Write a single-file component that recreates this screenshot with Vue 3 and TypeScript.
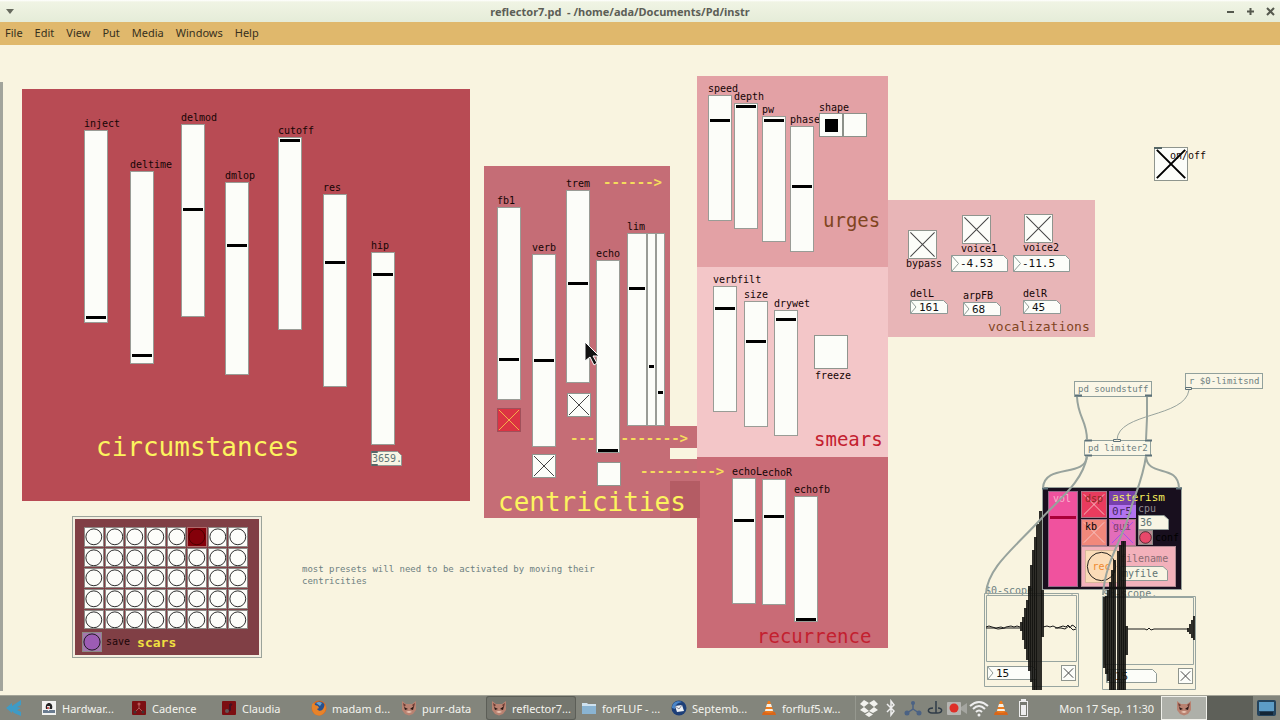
<script setup lang="ts">
import { ref } from 'vue'

interface Box { x: number; y: number; w: number; h: number }
interface Slider extends Box { id: string; label?: string; knob: number }
interface Toggle extends Box { id: string; on: boolean; tone?: string }
interface Num extends Box { id: string; value: string; arrow: boolean; tone?: string }
interface Caption { x: number; y: number; text: string; kind: string; for?: string }

const title = 'reflector7.pd  - /home/ada/Documents/Pd/instr'

// Patch coordinates start above the visible part of the canvas.
const scrollTop = 45

const at = (x: number, y: number) => ({ left: `${x}px`, top: `${y - scrollTop}px` })
const box = (b: Box) => ({ ...at(b.x, b.y), width: `${b.w}px`, height: `${b.h}px` })

const panels: (Box & { tone: string })[] = [
  { x: 22, y: 89, w: 448, h: 412, tone: 'circumstances' },
  { x: 484, y: 166, w: 186, h: 352, tone: 'centricities' },
  { x: 670, y: 426, w: 27, h: 22, tone: 'centricities' },
  { x: 670, y: 459, w: 27, h: 24, tone: 'centricities' },
  { x: 697, y: 76, w: 191, h: 191, tone: 'urges' },
  { x: 697, y: 267, w: 191, h: 190, tone: 'smears' },
  { x: 697, y: 457, w: 191, h: 191, tone: 'recurrence' },
  { x: 670, y: 481, w: 30, h: 37, tone: 'overlap' },
  { x: 888, y: 200, w: 207, h: 137, tone: 'vocalizations' },
]

const sliders: Slider[] = [
  { id: 'inject', label: 'inject', x: 84, y: 130, w: 24, h: 193, knob: 317 },
  { id: 'deltime', label: 'deltime', x: 130, y: 171, w: 24, h: 193, knob: 355 },
  { id: 'delmod', label: 'delmod', x: 181, y: 124, w: 24, h: 193, knob: 209 },
  { id: 'dmlop', label: 'dmlop', x: 225, y: 182, w: 24, h: 193, knob: 245 },
  { id: 'cutoff', label: 'cutoff', x: 278, y: 137, w: 24, h: 193, knob: 140 },
  { id: 'res', label: 'res', x: 323, y: 194, w: 24, h: 193, knob: 262 },
  { id: 'hip', label: 'hip', x: 371, y: 252, w: 24, h: 193, knob: 274 },
  { id: 'fb1', label: 'fb1', x: 497, y: 207, w: 24, h: 193, knob: 359 },
  { id: 'verb', label: 'verb', x: 532, y: 254, w: 24, h: 193, knob: 360 },
  { id: 'trem', label: 'trem', x: 566, y: 190, w: 24, h: 193, knob: 283 },
  { id: 'echo', label: 'echo', x: 596, y: 260, w: 24, h: 193, knob: 450 },
  { id: 'lim', label: 'lim', x: 627, y: 233, w: 20, h: 193, knob: 288 },
  { id: 'lim-left', x: 647, y: 233, w: 9, h: 193, knob: 366 },
  { id: 'lim-right', x: 656, y: 233, w: 9, h: 193, knob: 392 },
  { id: 'speed', label: 'speed', x: 708, y: 95, w: 24, h: 126, knob: 120 },
  { id: 'depth', label: 'depth', x: 734, y: 103, w: 24, h: 126, knob: 106 },
  { id: 'pw', label: 'pw', x: 762, y: 116, w: 24, h: 126, knob: 120 },
  { id: 'phase', label: 'phase', x: 790, y: 126, w: 24, h: 126, knob: 186 },
  { id: 'verbfilt', label: 'verbfilt', x: 713, y: 286, w: 24, h: 126, knob: 308 },
  { id: 'size', label: 'size', x: 744, y: 301, w: 24, h: 126, knob: 341 },
  { id: 'drywet', label: 'drywet', x: 774, y: 310, w: 24, h: 126, knob: 319 },
  { id: 'echoL', label: 'echoL', x: 732, y: 478, w: 24, h: 126, knob: 520 },
  { id: 'echoR', label: 'echoR', x: 762, y: 479, w: 24, h: 126, knob: 516 },
  { id: 'echofb', label: 'echofb', x: 794, y: 496, w: 24, h: 126, knob: 619 },
]
const labelHeight = 12
const travel = (s: Slider) => s.h - 5
const level = (s: Slider) => s.y + s.h - 3 - s.knob

const toggles = ref<Toggle[]>([
  { id: 'fb1-on', x: 497, y: 408, w: 24, h: 24, on: true, tone: 'hot' },
  { id: 'trem-on', x: 567, y: 393, w: 24, h: 24, on: true },
  { id: 'verb-on', x: 532, y: 454, w: 24, h: 24, on: true },
  { id: 'echo-on', x: 597, y: 462, w: 24, h: 24, on: false },
  { id: 'freeze', x: 814, y: 335, w: 34, h: 34, on: false },
  { id: 'bypass', x: 908, y: 230, w: 29, h: 29, on: true },
  { id: 'voice1', x: 962, y: 215, w: 29, h: 29, on: true },
  { id: 'voice2', x: 1024, y: 214, w: 29, h: 29, on: true },
  { id: 'onoff', x: 1154, y: 147, w: 34, h: 34, on: true, tone: 'heavy' },
])
const scopeToggles = ref<Toggle[]>([
  { id: 'scope1-on', x: 1061, y: 665, w: 15, h: 16, on: true },
  { id: 'scope2-on', x: 1178, y: 668, w: 15, h: 16, on: true },
])

const numbers: Num[] = [
  { id: 'hip-hz', x: 371, y: 451, w: 31, h: 15, value: '3659.', arrow: false, tone: 'faded' },
  { id: 'voice1-db', x: 951, y: 255, w: 57, h: 17, value: '-4.53', arrow: true },
  { id: 'voice2-db', x: 1013, y: 255, w: 57, h: 17, value: '-11.5', arrow: true },
  { id: 'delL', x: 910, y: 300, w: 38, h: 14, value: '161', arrow: true },
  { id: 'arpFB', x: 963, y: 302, w: 38, h: 14, value: '68', arrow: true },
  { id: 'delR', x: 1023, y: 300, w: 38, h: 14, value: '45', arrow: true },
  { id: 'scope1-n', x: 987, y: 666, w: 50, h: 14, value: '15', arrow: true },
  { id: 'scope2-n', x: 1106, y: 669, w: 51, h: 14, value: '15', arrow: true },
]
const frame = (n: Box) => {
  const r = n.w - 0.5
  const b = n.h - 0.5
  return `M.5 .5H${r - 4}L${r} 4.5V${b}H.5Z`
}
const pointer = (n: Box) => `M.5 .5L${n.h / 2 - 1} ${n.h / 2}L.5 ${n.h - 0.5}`

const captions: Caption[] = [
  { x: 96, y: 432, text: 'circumstances', kind: 'huge' },
  { x: 498, y: 487, text: 'centricities', kind: 'huge' },
  { x: 823, y: 208, text: 'urges', kind: 'big brown' },
  { x: 814, y: 427, text: 'smears', kind: 'big red' },
  { x: 757, y: 624, text: 'recurrence', kind: 'big red' },
  { x: 988, y: 319, text: 'vocalizations', kind: 'mid brown' },
  { x: 819, y: 102, text: 'shape', kind: 'small' },
  { x: 815, y: 370, text: 'freeze', kind: 'small', for: 'freeze' },
  { x: 906, y: 258, text: 'bypass', kind: 'small', for: 'bypass' },
  { x: 961, y: 243, text: 'voice1', kind: 'small', for: 'voice1' },
  { x: 1023, y: 242, text: 'voice2', kind: 'small', for: 'voice2' },
  { x: 1170, y: 150, text: 'on/off', kind: 'small', for: 'onoff' },
  { x: 910, y: 288, text: 'delL', kind: 'small', for: 'delL' },
  { x: 963, y: 290, text: 'arpFB', kind: 'small', for: 'arpFB' },
  { x: 1023, y: 288, text: 'delR', kind: 'small', for: 'delR' },
  { x: 985, y: 585, text: '$0-scope', kind: 'small faded' },
  { x: 1103, y: 588, text: '$0-scope.', kind: 'small faded' },
]
const arrows: Caption[] = [
  { x: 603, y: 174, text: '------>', kind: 'arrow' },
  { x: 570, y: 430, text: '------------->', kind: 'arrow' },
  { x: 640, y: 463, text: '--------->', kind: 'arrow' },
]

const objects: (Box & { text: string })[] = [
  { x: 1074, y: 381, w: 78, h: 16, text: 'pd soundstuff' },
  { x: 1185, y: 373, w: 78, h: 16, text: 'r $0-limitsnd' },
  { x: 1084, y: 440, w: 67, h: 16, text: 'pd limiter2' },
]

const activePreset = 5
const menus = ['File', 'Edit', 'View', 'Put', 'Media', 'Windows', 'Help']

const tasks = [
  { icon: 'java', text: 'Hardwar...' },
  { icon: 'cadence', text: 'Cadence' },
  { icon: 'claudia', text: 'Claudia' },
  { icon: 'firefox', text: 'madam d...' },
  { icon: 'cat', text: 'purr-data' },
  { icon: 'cat', text: 'reflector7...', active: true },
  { icon: 'folder', text: 'forFLUF - ...' },
  { icon: 'mail', text: 'Septemb...' },
  { icon: 'cone', text: 'forfluf5.w...' },
]
const tray = ['dropbox', 'bluetooth', 'network', 'jack', 'record', 'wifi', 'cone', 'battery']

// Waveform columns: x, top, bottom
const burst1 = [
  [1020, 622, 631], [1022, 617, 640], [1024, 608, 649], [1026, 600, 660], [1028, 586, 671],
  [1030, 565, 682], [1032, 550, 690], [1034, 537, 690], [1036, 524, 690], [1039, 511, 690], [1041, 590, 637],
]
const burst2 = [
  [1103, 597, 668], [1105, 596, 674], [1107, 590, 681], [1109, 582, 690], [1111, 570, 690],
  [1113, 560, 690], [1117, 551, 690], [1119, 545, 690], [1121, 541, 690], [1123, 541, 690], [1125, 626, 655],
]
const tail2 = [[1187, 628, 632], [1189, 624, 634], [1191, 620, 638], [1193, 616, 640]]
</script>

<template>
  <div class="window">
    <header class="titlebar">
      <button class="tb" aria-label="Window menu"><svg width="8" height="5"><path d="M0 0H8L4 5Z" fill="#666a5e" /></svg></button>
      <h1>{{ title }}</h1>
      <div class="controls">
        <button class="tb" aria-label="Minimize"><svg width="9" height="9"><path d="M1 5H8" /></svg></button>
        <button class="tb" aria-label="Maximize"><svg width="9" height="9"><path d="M1 4.500H8M4.500 1V8" /></svg></button>
        <button class="tb" aria-label="Close"><svg width="9" height="9"><path d="M1 1L8 8M8 1L1 8" /></svg></button>
      </div>
    </header>

    <nav class="menubar"><button v-for="m in menus" :key="m">{{ m }}</button></nav>

    <main class="canvas">
      <div class="edge"></div>
      <div v-for="(p, i) in panels" :key="i" class="item" :class="['p-' + p.tone]" :style="box(p)"></div>
      <span v-for="a in arrows" :key="a.y" class="item" :class="a.kind" :style="at(a.x, a.y)">{{ a.text }}</span>

      <div v-for="s in sliders" :key="s.id" class="item slider" :style="at(s.x, s.y - labelHeight)">
        <label :for="s.id" class="small">{{ s.label }}</label>
        <input :id="s.id" type="range" :aria-label="s.label ?? s.id" min="0" :max="travel(s)" :value="level(s)" :style="{ width: s.w + 'px', height: s.h + 'px' }" />
      </div>

      <fieldset class="item radios" :style="at(819, 113)" aria-label="shape">
        <input type="radio" name="shape" aria-label="shape 1" checked /><input type="radio" name="shape" aria-label="shape 2" />
      </fieldset>

      <span v-for="t in toggles" :key="t.id" class="item toggle" :class="t.tone" :style="box(t)">
        <input :id="t.id" v-model="t.on" type="checkbox" :aria-label="t.id" />
        <svg v-if="t.on" viewBox="0 0 24 24"><path d="M2 2L22 22M22 2L2 22" /></svg>
      </span>

      <span v-for="n in numbers" :key="n.id" class="item num" :class="[n.tone, { arrowed: n.arrow }]" :style="box(n)">
        <svg :width="n.w" :height="n.h"><path class="fill" :d="frame(n)" /><path v-if="n.arrow" class="tip" :d="pointer(n)" /></svg>
        <input :id="n.id" type="text" :value="n.value" :aria-label="n.id" />
      </span>

      <template v-for="c in captions" :key="c.text">
        <label v-if="c.for" class="item" :class="c.kind" :for="c.for" :style="at(c.x, c.y)">{{ c.text }}</label>
        <span v-else class="item" :class="c.kind" :style="at(c.x, c.y)">{{ c.text }}</span>
      </template>

      <p class="item note" :style="at(302, 563)">most presets will need to be activated by moving their<br />centricities</p>

      <section class="item scars" :style="at(72, 516)">
        <div class="scars-body">
          <div class="presets">
            <button v-for="i in 40" :key="i" class="bang" :class="{ lit: i - 1 === activePreset }" :aria-label="'preset ' + i">
              <svg viewBox="0 0 20 20"><circle cx="10" cy="10" r="9" /></svg>
            </button>
          </div>
          <div class="scars-foot">
            <button id="save" class="bang violet" aria-label="save"><svg viewBox="0 0 20 20"><circle cx="10" cy="10" r="9" /></svg></button>
            <label for="save" class="small">save</label>
            <strong>scars</strong>
          </div>
        </div>
      </section>

      <div v-for="o in objects" :key="o.text" class="item object" :style="box(o)">{{ o.text }}</div>

      <section class="item asterism" :style="at(1042, 487)">
        <div class="vol"><span>vol</span><i></i></div>
        <div class="ast-right">
          <div class="ast-top">
            <label class="cell dsp"><input type="checkbox" checked /><svg viewBox="0 0 26 26"><path d="M2 2L24 24M24 2L2 24" /></svg><span>dsp</span></label>
            <div class="name"><b>asterism</b><span>0r5</span></div>
            <label class="cell kb"><input type="checkbox" checked /><svg viewBox="0 0 26 26"><path d="M2 2L24 24M24 2L2 24" /></svg><span>kb</span></label>
            <label class="cell gui"><input type="checkbox" checked /><svg viewBox="0 0 26 26"><path d="M2 2L24 24M24 2L2 24" /></svg><span>gui</span></label>
            <div class="status">
              <label for="cpu">cpu</label>
              <span class="num faded plain"><svg width="31" height="15"><path class="fill" d="M.5 .5H26L30.500 4.500V14.500H.5Z" /></svg><input id="cpu" type="text" value="36" /></span>
              <span class="conf"><button id="conf" class="bang rose" aria-label="conf"><svg viewBox="0 0 20 20"><circle cx="10" cy="10" r="9" /></svg></button><label for="conf">conf</label></span>
            </div>
          </div>
          <div class="recorder">
            <button class="rec"><svg viewBox="0 0 34 34"><circle cx="17" cy="17" r="15.500" /></svg><span>rec</span></button>
            <div class="file">
              <label for="filename">filename</label>
              <span class="num faded plain"><svg width="48" height="15"><path class="fill" d="M.5 .5H43L47.500 4.500V14.500H.5Z" /></svg><input id="filename" type="text" value="myfile" /></span>
            </div>
          </div>
        </div>
      </section>

      <svg class="item cords" :style="at(970, 360)" width="310" height="332" viewBox="970 360 310 332">
        <g class="scope">
          <path d="M984.500 593.500H1078.500V686.500H984.500ZM986.500 595.500H1076.500V661.500H986.500ZM1072 593.500V595.500" />
          <path d="M1102.500 596.500H1195.500V689.500H1102.500ZM1104.500 597.500H1193.500V664.500H1104.500Z" />
        </g>
        <g class="wave">
          <path d="M986 627l3-1 3 1 4 1 5-1 3 1 2-1 5-1 3 1 3-1 3 1M1043 627l4-1 3 1 3-1 4 2 3-1 3-1 3 1 2-2 2 3 2-3 2 1 2 2" />
          <path d="M986 628l8 0 4 1 8-1 6 0 8 0M1055 628l6 0 4 1 4-3 4 4 3-1" />
          <path d="M1127 629H1145l2 1 2-2 2 2 3-1H1188" />
        </g>
        <g class="bars">
          <rect v-for="b in burst1" :key="b[0]" :x="b[0]" :y="b[1]" width="3" :height="b[2] - b[1]" />
          <rect v-for="b in burst2" :key="b[0]" :x="b[0]" :y="b[1]" width="3" :height="b[2] - b[1]" />
          <rect v-for="b in tail2" :key="b[0]" :x="b[0]" :y="b[1]" width="2" :height="b[2] - b[1]" />
        </g>
        <g class="ports">
          <path d="M1075 395.500h7M1145 395.500h7M1085 440.500h7M1145 440.500h7M1085 455.500h7M1145 455.500h7M1042 488.500h6M1176 488.500h6" />
          <path class="ctl" d="M1113.500 439.500h7v2h-7ZM1185.500 387.500h6v2h-6Z" />
        </g>
        <g class="cord">
          <path d="M1077 397C1078 418 1087 420 1087 440M1147 397V418L1146 440" />
          <path d="M1087 456C1086 478 1044 463 1043 488M1146 456C1147 478 1178 463 1179 488" />
          <path d="M1087 456C1083 482 1058 500 1040 520C1012 550 988 568 986 593M1146 456C1143 478 1136 492 1131 508C1124 538 1105 560 1103 595" />
          <path class="thin" d="M1189 390C1185 418 1118 412 1117 440" />
        </g>
      </svg>

      <span v-for="t in scopeToggles" :key="t.id" class="item toggle" :style="box(t)">
        <input :id="t.id" v-model="t.on" type="checkbox" :aria-label="t.id" />
        <svg v-if="t.on" viewBox="0 0 16 16"><path d="M3 3L13 13M13 3L3 13" /></svg>
      </span>

      <svg class="item" :style="at(583, 341)" width="18" height="26"><path d="M2 1V20L7 16L11 24L14 22L10 15H16Z" fill="#111" stroke="#fff" stroke-width="1" /></svg>
      <svg class="item" :style="at(370, 446)" width="12" height="22"><path d="M1.500 5.500h6v1h-6ZM1.500 18.500h6v1h-6Z" fill="none" stroke="#566" /></svg>
      <svg class="item" :style="at(1154, 147)" width="8" height="3"><path d="M0 1H8" stroke="#566" stroke-width="2" /></svg>
    </main>

    <footer class="taskbar">
      <button class="start" aria-label="Start"><svg width="18" height="18"><path d="M1 9L7 4V7L16 1V6L12 8L16 9L12 11L16 13V17L9 14L7 12V14Z" fill="#3e9bc6" /></svg></button>
      <button v-for="t in tasks" :key="t.text" class="task" :class="{ active: t.active }">
        <svg width="16" height="16" viewBox="0 0 16 16"><use :href="'#i-' + t.icon" /></svg><span>{{ t.text }}</span>
      </button>
      <div class="tray">
        <svg v-for="t in tray" :key="t" class="trayicon" viewBox="0 0 20 18"><use :href="'#i-' + t" :x="t === 'cone' ? 2 : 0" :y="t === 'cone' ? 1 : 0" /></svg>
        <time>Mon 17 Sep, 11:30</time>
        <button class="desk current" aria-label="Workspace 1"><svg width="16" height="16"><use href="#i-cat" /></svg></button>
        <button class="desk" aria-label="Workspace 2"></button>
        <button class="show" aria-label="Show desktop"><svg width="19" height="16"><rect x="0" y="0" width="19" height="16" rx="2" fill="#24435c" /><rect x="2" y="2" width="15" height="9" fill="#5d9cc6" /><rect x="3" y="12" width="13" height="3" fill="#142636" /></svg></button>
      </div>
    </footer>

    <svg class="defs" width="0" height="0" aria-hidden="true">
      <defs>
        <g id="i-java"><rect x="1" y="1" width="14" height="14" fill="#f2f2f0" /><path d="M2 10H14V13H2Z" fill="#6a7c90" /><path d="M5 9C4 5 6 3 8 3C10 3 12 5 11 9Z" fill="#222" /><path d="M6 6H9L8 11H7Z" fill="#eee" /><circle cx="7" cy="8" r="1" fill="#c33" /></g>
        <g id="i-cadence"><rect x="1" y="1" width="14" height="14" rx="1" fill="#7c0e12" /><path d="M8 4V8L4 12M8 8L12 12" stroke="#a55" fill="none" /><circle cx="8" cy="4" r="1.500" fill="#b55" /><circle cx="4" cy="12" r="1.500" fill="#433" /><circle cx="12" cy="12" r="1.500" fill="#433" /></g>
        <g id="i-claudia"><rect x="1" y="1" width="14" height="14" rx="1" fill="#7c0e12" /><path d="M9 4V10L5 12M9 4L11 5" stroke="#412" stroke-width="2" fill="none" /><circle cx="6" cy="11" r="2" fill="#655" /></g>
        <g id="i-firefox"><circle cx="8" cy="8" r="7.500" fill="#dd6a1c" /><circle cx="8.500" cy="7" r="5.500" fill="#28508e" /><path d="M5 3Q8 1 11 3L9 6Z" fill="#6ba4cf" /><path d="M1 4L3 3L4 5L7 6L8 8L6 9C8 12 12 11 13 7L14 4C16 9 14 14 9 15.500C4 16 0 12 1 4Z" fill="#e8832a" /></g>
        <g id="i-cat"><path d="M1 1L5 4H11L15 1V10L12 14L8 15.500L4 14L1 10Z" fill="#b98271" /><path d="M2 3L5 5L3 7ZM14 3L11 5L13 7Z" fill="#6e3b34" /><path d="M3 7L7 9L4 10ZM13 6L9 9L12 10Z" fill="#2a1715" /><path d="M5 12Q8 10 11 12L8 13Z" fill="#eac7b6" /></g>
        <g id="i-folder"><path d="M1 3H6L7 4H15V14H1Z" fill="#cfe2ef" /><path d="M1 6H15V14H1Z" fill="#8ab4d2" /></g>
        <g id="i-mail"><circle cx="8" cy="8" r="7.500" fill="#1d3f78" /><path d="M4 6L11 5L13 11L6 12Z" fill="#eef2f6" /><path d="M4 6L8 9L11 5" stroke="#889" fill="none" /><path d="M1 8C1 3 6 0 11 2C6 3 4 5 4 9Z" fill="#4b86c9" /></g>
        <g id="i-cone"><path d="M2 12H14L15 15H1Z" fill="#d8661a" /><path d="M7 1H9L12.500 12Q8 14 3.500 12Z" fill="#ee7b1d" /><path d="M6 4H10L11 7H5ZM4.500 9H11.500L12 11H4Z" fill="#f3efe6" /></g>
        <g id="i-dropbox"><path d="M5 1L10 4L5 8L1 5ZM15 1L19 5L15 8L10 4ZM5 8L10 12L6 14L1 11ZM15 8L19 11L14 14L10 12ZM10 13L14 15.500L10 18L6 15.500Z" fill="#f2f2ee" /></g>
        <g id="i-bluetooth"><path d="M6 5L13 12L10 16V2L13 6L6 13" stroke="#eee" stroke-width="1.500" fill="none" /></g>
        <g id="i-network"><path d="M10 4V10L4 14M10 10L16 14" stroke="#4b6284" stroke-width="1.500" fill="none" /><circle cx="10" cy="4" r="2" fill="#4b6284" /><circle cx="4" cy="14" r="2.500" fill="#4b6284" /><circle cx="16" cy="14" r="2.500" fill="#4b6284" /></g>
        <g id="i-jack"><path d="M11 2V14M8 9C2 9 2 14 7 14H12C18 14 18 9 13 9" stroke="#303c48" stroke-width="1.500" fill="none" /></g>
        <g id="i-record"><rect x="0" y="3" width="14" height="13" rx="1" fill="#b5b5b2" /><path d="M14 8L20 4V15L14 11Z" fill="#a4a5a0" /><circle cx="7" cy="9" r="4.500" fill="#de2f28" /></g>
        <g id="i-wifi"><path d="M1 7Q10 -1 19 7M4 10Q10 4 16 10M7 13Q10 10 13 13" stroke="#eee" stroke-width="2" fill="none" /><circle cx="10" cy="16" r="1.500" fill="#eee" /></g>
        <g id="i-battery"><rect x="8" y="0" width="5" height="3" fill="#eee" /><rect x="6.500" y="2.500" width="8" height="15" fill="#777970" stroke="#eee" /><rect x="8" y="6" width="5" height="10" fill="#eee" /></g>
      </defs>
    </svg>
  </div>
</template>

<style scoped>
* { box-sizing: border-box; }
.window { min-height: 100vh; display: flex; flex-direction: column; background: #f9f4e0; font-family: "Noto Sans", sans-serif; overflow: hidden; }
button { border: 0; padding: 0; margin: 0; background: none; font: inherit; color: inherit; }
input { margin: 0; padding: 0; border: 0; background: none; color: inherit; font: inherit; }
svg { display: block; }

.titlebar { height: 22px; display: flex; align-items: center; justify-content: space-between; background: linear-gradient(#fff, #f0f4e4 2px, #e5ecd8); }
.titlebar h1 { margin: 0; padding-top: 1px; font-size: 11px; font-weight: 700; line-height: 21px; white-space: pre; color: #5c5e56; }
.tb { width: 20px; height: 22px; display: grid; place-items: center; }
.controls { display: flex; width: 60px; }
.controls path { stroke: #55594e; stroke-width: 2; fill: none; }

.menubar { height: 23px; display: flex; align-items: center; gap: 12px; padding: 0 5px 2px; background: #e0b86c; color: #37301d; font-size: 11px; }

.canvas { flex: 1; position: relative; overflow: hidden; font-family: "DejaVu Sans Mono", monospace; }
.item { position: absolute; white-space: pre; }
.edge { position: absolute; left: 0; top: 37px; bottom: 4px; width: 3px; background: #a2a49c; }
.p-circumstances { background: #b84b54; }
.p-centricities { background: #c56d76; }
.p-overlap { background: #b45c64; }
.p-urges { background: #e3a1a5; }
.p-smears { background: #f3c6c8; }
.p-recurrence { background: #c96b76; }
.p-vocalizations { background: #e8b5b7; }

.small { font-size: 10px; line-height: 12px; color: #150505; }
.huge { font-size: 26px; line-height: 30px; color: #fcf45e; }
.big { font-size: 19px; line-height: 24px; }
.mid { font-size: 13px; line-height: 16px; }
.brown { color: #80451f; }
.red { color: #c3202f; }
.arrow { font-size: 14px; line-height: 16px; color: #f5dc5c; font-weight: bold; }
.small.faded { color: #6d8080; }
.note { margin: 0; font-size: 9px; line-height: 12px; color: #6d8080; }

.slider { display: flex; flex-direction: column; align-items: flex-start; }
.slider label { height: 12px; width: 0; }
.slider input { appearance: none; writing-mode: vertical-lr; direction: rtl; background: #fcfdf9; border: 1px solid #999c96; }
.slider input::-webkit-slider-runnable-track { width: 100%; height: 100%; }
.slider input::-webkit-slider-thumb { appearance: none; width: 100%; height: 3px; padding: 0 1px; border: 0; border-radius: 0; background: #000; background-clip: content-box; }

.radios { margin: 0; padding: 0; border: 0; display: flex; }
.radios input { appearance: none; width: 24px; height: 24px; background: #fcfdf9; border: 1px solid #8c918a; display: grid; place-items: center; }
.radios input:checked::before { content: ""; width: 13px; height: 13px; background: #000; }

.toggle, .num, .cell { display: grid; }
.toggle > *, .num > *, .cell > * { grid-area: 1 / 1; min-width: 0; }
.toggle input { appearance: none; width: 100%; height: 100%; background: #fcfdf9; border: 1px solid #8f958e; }
.toggle svg { width: 100%; height: 100%; pointer-events: none; }
.toggle path { stroke: #444; stroke-width: 1; fill: none; vector-effect: non-scaling-stroke; }
.toggle.hot input { background: #dc3343; border-color: #a0505a; }
.toggle.hot path { stroke: #f4b04a; }
.toggle.heavy path { stroke: #000; stroke-width: 2; }

.num { font-size: 10px; color: #111; }
.num .fill { fill: #fcfdf9; stroke: #8f9a96; }
.num .tip { fill: none; stroke: #8f9a96; }
.num input { width: 100%; height: 100%; padding-left: 1px; outline: 0; }
.arrowed { font-size: 11px; }
.num.arrowed input { padding-left: 9px; }
.num.faded { color: #5f7474; }
.faded .fill { fill: #f8f5e4; }

.scars { width: 190px; padding: 2px; border: 1px solid #9ba39a; background: #f3eee0; }
.scars-body { background: #803f45; padding: 8px 11px 1px 9px; }
.presets { display: grid; grid-template-columns: repeat(8, 1fr); gap: 1px; }
.bang { aspect-ratio: 1; background: #fdfdfa; border: 1px solid #8d8a86; }
.bang svg { width: 100%; height: 100%; }
.bang circle { fill: none; stroke: #111; stroke-width: 1; }
.lit { background: #84000a; border-color: #b06a6a; }
.lit circle { stroke: #400; }
.scars-foot { display: flex; align-items: center; gap: 4px; margin: 1px 0 0 -2px; height: 24px; }
.scars-foot .bang { width: 20px; }
.violet { background: #a377ae; }
.violet circle { fill: #9c5cb4; }
.scars-foot .small { color: #1b0508; }
.scars-foot strong { font-size: 13px; color: #f0e040; margin-left: 3px; }

.object { padding-left: 3px; border: 1px solid #91a09c; font-size: 9px; line-height: 14px; color: #6d8080; background: #faf6e6; }

.asterism { width: 140px; height: 103px; display: flex; gap: 3px; padding: 3px 4px 2px 5px; background: #180f1e; border: 1px solid #98a29c; font-size: 10px; line-height: 12px; }
.vol { flex: none; width: 30px; background: #f0529e; border: 1px solid #98688a; display: flex; flex-direction: column; gap: 11px; padding: 1px; color: #f8b3cd; }
.vol span { padding-left: 3px; }
.vol i { height: 3px; background: #ab0038; }
.ast-right { flex: 1; min-width: 0; display: flex; flex-direction: column; }
.ast-top { display: grid; grid-template-columns: 26px 27px minmax(0, 1fr); grid-template-rows: 27px 27px; gap: 1px 2px; }
.cell { border: 1px solid #a78; }
.cell input { appearance: none; }
.cell svg { width: 100%; height: 100%; }
.cell path { stroke: #f6c6c6; stroke-width: 1; fill: none; }
.cell span { padding: 1px 0 0 3px; }
.dsp { background: #e83b5e; color: #8b2c24; }
.kb { background: #f2887b; color: #000; }
.gui { background: #e36dba; color: #85406c; }
.gui path { stroke: #a352e8; }
.name { grid-column: 2 / 4; display: flex; flex-direction: column; align-items: flex-start; }
.name b { font-weight: normal; font-size: 11px; line-height: 14px; padding-left: 3px; color: #f5ee5c; background: linear-gradient(90deg, #7740ac 27px, transparent 27px); }
.name span { width: 27px; height: 13px; padding-left: 3px; font-size: 11px; line-height: 13px; background: #b273f0; color: #44285c; }
.status { grid-column: 3; grid-row: 2; display: flex; flex-direction: column; margin-top: -16px; color: #8d898f; }
.status .num { width: 31px; height: 15px; }
.num.plain input { padding-left: 2px; }
.conf { display: flex; align-items: center; color: #000; }
.conf .bang { flex: none; width: 15px; height: 15px; }
.conf label { padding-left: 2px; }
.rose circle { fill: #e8486a; }
.rose { background: #b98a92; }
.recorder { flex: 1; display: flex; align-items: center; margin-right: 1px; padding: 0 3px; background: #f3b1bb; border: 1px solid #b08a92; }
.rec { flex: none; width: 33px; height: 33px; display: grid; background: #fbdcb8; color: #ee8a30; border: 1px solid #d8b89c; }
.rec > * { grid-area: 1 / 1; align-self: center; }
.rec svg { width: 100%; height: 100%; }
.rec circle { fill: none; stroke: #111; }
.file { display: flex; flex-direction: column; width: 48px; margin-left: 2px; color: #8a6b72; line-height: 14px; }
.file .num { width: 48px; height: 15px; }

.cords { pointer-events: none; }
.cords path { fill: none; }
.scope path { stroke: #98a5a0; }
.wave path { stroke: #1a1a1a; stroke-width: 1; }
.bars { fill: #12120f; fill-opacity: .88; }
.ports path { stroke: #5c7078; stroke-width: 2; }
.ports .ctl { stroke-width: 1; fill: #faf4e0; }
.cord path { stroke: #98a39d; stroke-width: 2; }
.cord .thin { stroke-width: 1; }

.taskbar { height: 25px; display: flex; align-items: stretch; background: #83857c; border-top: 1px solid #a4a498; color: #f4f4ee; font-size: 11px; white-space: nowrap; }
.start { width: 36px; padding-left: 5px; display: grid; align-items: center; }
.task { width: 90px; display: flex; align-items: center; gap: 5px; padding-left: 5px; border-radius: 3px; }
.task svg { flex: none; }
.task.active { background: #74766e; box-shadow: inset 0 0 0 1px #5c5e57; }
.tray { margin-left: auto; display: flex; align-items: stretch; padding-left: 2px; border-left: 1px solid #96988f; }
.trayicon { width: 22px; height: 18px; align-self: center; }
.tray time { margin: 0 7px 0 25px; align-self: center; }
.desk { width: 46px; background: #5e6059; display: grid; place-items: center; }
.desk.current { background: #aeb0a9; border: 1px solid #f0f0ea; }
.show { width: 27px; display: grid; place-items: center; }
.defs { position: absolute; }
</style>

<style>
body { margin: 0; background: #f9f4e0; }
</style>
